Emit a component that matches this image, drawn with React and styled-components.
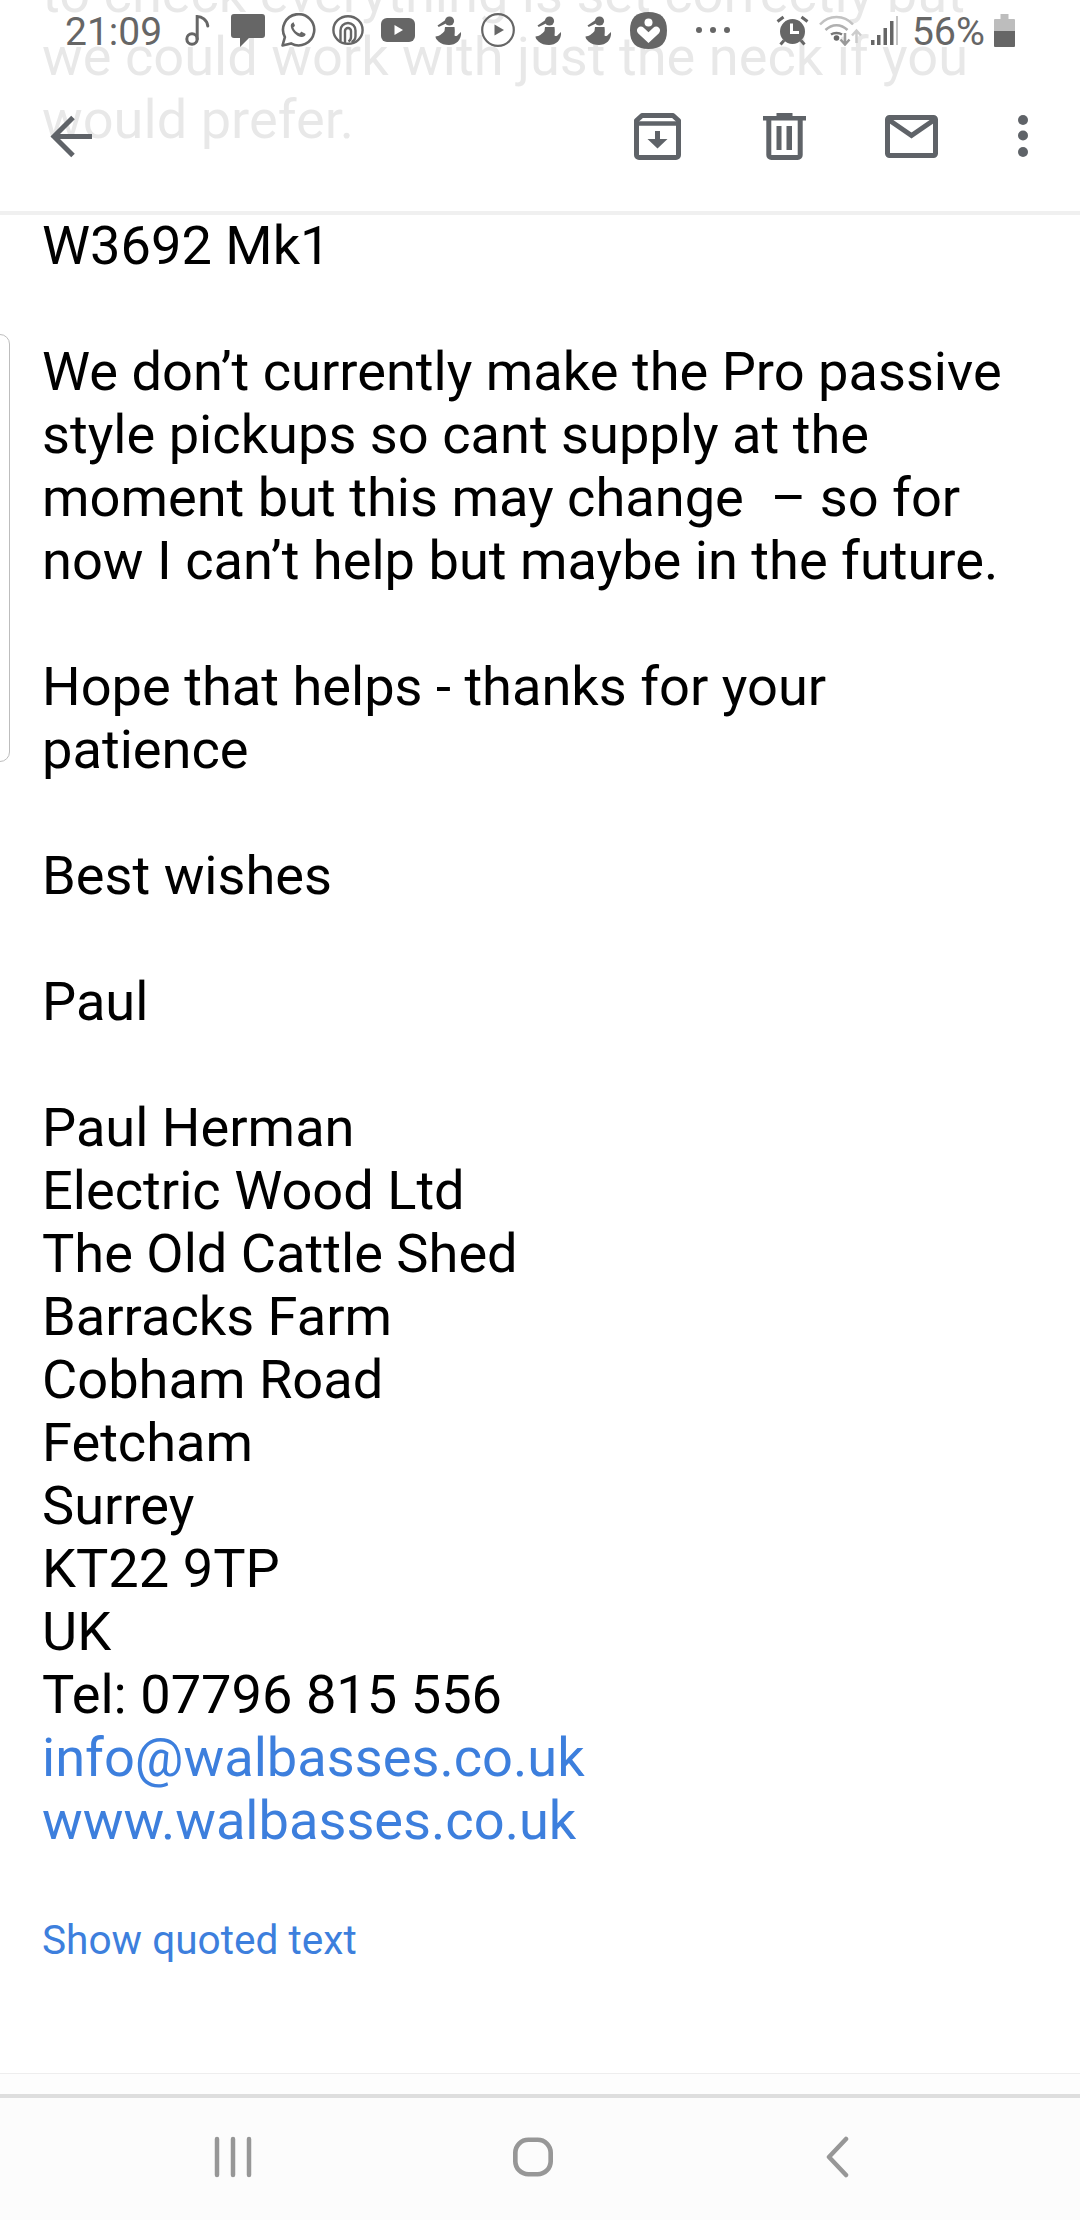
import React from "react";
import styled, { createGlobalStyle } from "styled-components";

const GlobalStyle = createGlobalStyle`
  html, body {
    margin: 0;
    padding: 0;
    background: #fff;
  }
`;

const Page = styled.div`
  position: relative;
  width: 1080px;
  height: 2220px;
  display: flex;
  flex-direction: column;
  overflow: hidden;
  background: #fff;
  font-family: Roboto, "Liberation Sans", sans-serif;
`;

const Header = styled.header`
  position: absolute;
  top: 0;
  left: 0;
  right: 0;
  height: 211px;
  background: rgba(255, 255, 255, 0.91);
  border-bottom: 4px solid #f0f0f0;
`;

const StatusBar = styled.div`
  display: flex;
  align-items: center;
  height: 60px;
  padding-left: 65px;
  color: #666666;
`;

const Time = styled.span`
  font-size: 39px;
  line-height: 60px;
  width: 108px;
  flex: none;
  position: relative;
  top: 2px;
`;

const Slot = styled.div`
  width: 50px;
  height: 60px;
  flex: none;
  display: flex;
  align-items: center;
  justify-content: center;
`;

const Overflow = styled.div`
  display: flex;
  gap: 8px;
  margin-left: 23px;
  span {
    width: 6px;
    height: 6px;
    border-radius: 50%;
    background: #666666;
  }
`;

const RightGroup = styled.div`
  display: flex;
  align-items: center;
  margin-left: auto;
  padding-right: 65px;
`;

const Tray = styled.div`
  display: flex;
  align-items: center;
  margin-left: ${(p) => p.$gap || 0}px;
`;

const Percent = styled.span`
  font-size: 39.5px;
  line-height: 60px;
  margin-left: 14px;
  position: relative;
  top: 2px;
`;

const Battery = styled.div`
  width: 21px;
  height: 33px;
  margin-left: 9px;
`;

const ActionBar = styled.div`
  display: flex;
  align-items: center;
  height: 60px;
  margin-top: 46px;
  padding-left: 50px;
`;

const ActionGroup = styled.div`
  display: flex;
  align-items: center;
  margin-left: auto;
  padding-right: 52px;
`;

const ActionButton = styled.div`
  display: flex;
  align-items: center;
  justify-content: center;
  margin-left: ${(p) => p.$gap || 0}px;
`;

const ScrollHandle = styled.div`
  position: absolute;
  left: -10px;
  top: 334px;
  width: 18px;
  height: 426px;
  border: 1.5px solid #bdbdbd;
  border-radius: 10px;
`;

const Message = styled.main`
  flex: 1;
  margin-top: -38px;
  padding-left: 42px;
  color: #000;
  font-size: 54.2px;
  line-height: 63px;
`;

const Paragraph = styled.p`
  margin: 0 0 63px;
`;

const Line = styled.span`
  display: block;
  white-space: pre;
`;

const Link = styled.span`
  display: block;
  white-space: pre;
  color: #3d7fdd;
`;

const QuotedLink = styled.div`
  margin-top: 60px;
  color: #3d7fdd;
  font-size: 40.6px;
  line-height: 56px;
`;

const Footer = styled.div`
  height: 20px;
  flex: none;
  background: #fdfdfd;
  border-top: 1px solid #eeeeee;
`;

const NavBar = styled.nav`
  height: 122px;
  flex: none;
  display: flex;
  align-items: flex-start;
  background: #fcfcfc;
  border-top: 4px solid #dedede;
`;

const NavItem = styled.div`
  display: flex;
  width: 40px;
  height: 42px;
  flex: none;
  margin-top: 38px;
  margin-left: ${(p) => p.$left}px;
`;

const MusicIcon = () => (
  <svg width="26" height="32" viewBox="0 0 26 32" fill="none" stroke="#666" strokeWidth="3">
    <circle cx="7" cy="25" r="5.2" />
    <path d="M12.2 25V2.5c4.5 0 9.8 3 10.6 9.5" strokeLinecap="round" />
  </svg>
);

const BubbleIcon = () => (
  <svg width="34" height="33" viewBox="0 0 34 33">
    <path d="M3 0h28a3 3 0 0 1 3 3v18a3 3 0 0 1-3 3H18l-9 9v-9H3a3 3 0 0 1-3-3V3a3 3 0 0 1 3-3z" fill="#666" />
  </svg>
);

const WhatsappIcon = () => (
  <svg width="35" height="34" viewBox="0 0 35 34" fill="none">
    <path d="M1.5 32.5l2.4-8.3A15.6 15.6 0 1 1 10 30.4z" stroke="#666" strokeWidth="2.6" strokeLinejoin="round" />
    <path d="M12 9.5c-1.5.6-2.6 2.2-2.1 4.4 1 4.4 5.2 9 10.2 10 2.2.4 3.8-.7 4.4-2.2.2-.6 0-1-.5-1.3l-3-1.5c-.5-.2-.9-.1-1.2.3l-1.2 1.4c-3-1-5.3-3.3-6.3-6l1.3-1.3c.3-.4.4-.8.2-1.2l-1.3-2.6c-.2-.5-.4-.6-.5-.4z" fill="#666" />
  </svg>
);

const SpiralIcon = () => (
  <svg width="32" height="30" viewBox="0 0 32 30" fill="none" stroke="#666" strokeWidth="2.4">
    <ellipse cx="16" cy="15" rx="14.6" ry="13.8" />
    <path d="M8.5 26V15.5a7.5 7.5 0 0 1 15 0V21c0 3-1.5 5-4 6" />
    <path d="M13 28V16a3 3 0 0 1 6 0v6c0 2-1 3.5-2.5 4.5" />
  </svg>
);

const YoutubeIcon = () => (
  <svg width="34" height="24" viewBox="0 0 34 24">
    <rect width="34" height="24" rx="6" fill="#666" />
    <path d="M13.5 7l8.5 5-8.5 5z" fill="#fff" />
  </svg>
);

const FigureIcon = () => (
  <svg width="28" height="29" viewBox="0 0 28 29" fill="#666">
    <circle cx="15.5" cy="5" r="4.6" />
    <path d="M11.5 4L3.5 9.5l1.2 1.5 7.3-3.500z" />
    <path d="M11 11h9.500c.4 3 .4 5.500 0 8.500 1.500 1 2.800.5 3.800-1l2.700-2.500c.5 4-1 7-3 9.500-2.500 2.500-6 3.500-9 3.500-4 0-8-1-10.500-3.500C3 24 1.500 22.500 1.500 20.500c3.500 0 7-3 9-5.500z" />
  </svg>
);

const PlayCircleIcon = () => (
  <svg width="34" height="34" viewBox="0 0 34 34" fill="none">
    <circle cx="17" cy="17" r="15.8" stroke="#666" strokeWidth="2.2" />
    <path d="M13.5 11.5L23 17l-9.5 5.5z" fill="#666" />
  </svg>
);

const HealthIcon = () => (
  <svg width="37" height="37" viewBox="0 0 37 37">
    <path d="M18.5 0C31 0 37 6 37 18.5S31 37 18.5 37 0 31 0 18.5 6 0 18.5 0z" fill="#666" />
    <circle cx="18.5" cy="10.5" r="4" fill="#fff" />
    <path d="M18.5 31L8.3 21.5c-1.8-1.8-1.8-4.3-.2-5.800 1.700-1.500 4-1.400 5.600.1l4.800 4.500 4.800-4.500c1.600-1.500 3.900-1.600 5.600-.1 1.600 1.500 1.600 4-.2 5.800z" fill="#fff" />
  </svg>
);

const AlarmIcon = () => (
  <svg width="33" height="32" viewBox="0 0 33 32" fill="none">
    <circle cx="16.5" cy="17.5" r="12.5" fill="#666" />
    <path d="M15.5 9.5v9h7.5" stroke="#fff" strokeWidth="3" />
    <path d="M1.5 7.5L7.5 3M31.5 7.5l-6-4.500M8 26.500l-3.500 4M25 26.500l3.500 4" stroke="#666" strokeWidth="3" />
  </svg>
);

const WifiIcon = () => (
  <svg width="43" height="32" viewBox="0 0 43 32" fill="none">
    <path d="M1 10.5C10 .5 25 .5 34 10.5" stroke="#c2c2c2" strokeWidth="2.5" />
    <path d="M6.5 16C13 9.5 22 9.5 28.5 16" stroke="#b0b0b0" strokeWidth="2.5" />
    <path d="M12 20.5c3-2 8-2 11 0" stroke="#777" strokeWidth="2.5" />
    <circle cx="17.5" cy="24" r="2.8" fill="#666" />
    <path d="M26 19v11M21.5 25.5l4.5 5 4.5-5" stroke="#999" strokeWidth="2.5" />
    <path d="M37.5 29V17M33 21.5l4.5-5 4.5 5" stroke="#ccc" strokeWidth="2.5" />
  </svg>
);

const SignalIcon = () => (
  <svg width="27" height="29" viewBox="0 0 27 29" fill="#666">
    <rect x="0" y="24" width="3.5" height="5" />
    <rect x="6" y="19" width="3.5" height="10" />
    <rect x="12.5" y="12" width="3.5" height="17" />
    <rect x="19" y="5" width="3.5" height="24" />
    <rect x="25" y="0" width="2" height="29" fill="#c4c4c4" />
  </svg>
);

const BatteryIcon = () => (
  <svg width="21" height="33" viewBox="0 0 21 33">
    <path d="M6.5 0h8v5h5.500a1 1 0 0 1 1 1v11H0V6a1 1 0 0 1 1-1h5.500z" fill="#bdbdbd" />
    <path d="M0 17h21v15a1 1 0 0 1-1 1H1a1 1 0 0 1-1-1z" fill="#666" />
  </svg>
);

const BackIcon = () => (
  <svg width="43" height="43" viewBox="0 0 43 43" fill="none" stroke="#5f6368" strokeWidth="5">
    <path d="M42 21.5H4M23 2.5L4 21.5l19 19" />
  </svg>
);

const ArchiveIcon = () => (
  <svg width="47" height="47" viewBox="0 0 47 47" fill="none">
    <path d="M8 2.5h31l5.500 5v34.500a2.500 2.500 0 0 1-2.500 2.500H5A2.500 2.500 0 0 1 2.500 42V7.500z" stroke="#5f6368" strokeWidth="5" strokeLinejoin="round" />
    <path d="M3 10.5h41" stroke="#5f6368" strokeWidth="4.5" />
    <path d="M21 18h5v8h7.5l-10 9.5-10-9.500H21z" fill="#5f6368" />
  </svg>
);

const TrashIcon = () => (
  <svg width="43" height="47" viewBox="0 0 43 47">
    <path d="M13.5 0h16v3H43v4.500H0V3h13.500z" fill="#5f6368" />
    <path d="M5.8 7v35a2.500 2.500 0 0 0 2.500 2.500h26.400a2.500 2.500 0 0 0 2.500-2.500V7" fill="none" stroke="#5f6368" strokeWidth="5" />
    <rect x="13.5" y="13" width="5" height="24" fill="#5f6368" />
    <rect x="23.5" y="13" width="5.5" height="24" fill="#5f6368" />
  </svg>
);

const MailIcon = () => (
  <svg width="53" height="43" viewBox="0 0 53 43" fill="none" stroke="#5f6368" strokeWidth="5">
    <rect x="2.5" y="2.5" width="48" height="38" rx="2" strokeLinejoin="round" />
    <path d="M4 5l22.5 15.500L49 5" />
  </svg>
);

const MoreIcon = () => (
  <svg width="10" height="42" viewBox="0 0 10 42" fill="#5f6368">
    <circle cx="5" cy="5" r="5" />
    <circle cx="5" cy="20.5" r="5" />
    <circle cx="5" cy="37" r="5" />
  </svg>
);

const RecentsIcon = () => (
  <svg width="40" height="42" viewBox="0 0 40 42" fill="none" stroke="#979797" strokeWidth="4.5" strokeLinecap="round">
    <path d="M4 3v36M20 3v36M36 3v36" />
  </svg>
);

const HomeIcon = () => (
  <svg width="43" height="42" viewBox="0 0 43 42" fill="none">
    <rect x="2.5" y="2.5" width="38" height="37" rx="14" stroke="#979797" strokeWidth="5" />
  </svg>
);

const ChevronIcon = () => (
  <svg width="24" height="42" viewBox="0 0 24 42" fill="none" stroke="#979797" strokeWidth="4.5" strokeLinecap="round" strokeLinejoin="round">
    <path d="M21 3L4 21l17 18" />
  </svg>
);

const notifications = [
  MusicIcon,
  BubbleIcon,
  WhatsappIcon,
  SpiralIcon,
  YoutubeIcon,
  FigureIcon,
  PlayCircleIcon,
  FigureIcon,
  FigureIcon,
  HealthIcon,
];

const paragraphs = [
  [
    "to check everything is set correctly but",
    "we could work with just the neck if you",
    "would prefer.",
  ],
  ["W3692 Mk1"],
  [
    "We don’t currently make the Pro passive",
    "style pickups so cant supply at the",
    "moment but this may change  – so for",
    "now I can’t help but maybe in the future.",
  ],
  ["Hope that helps - thanks for your", "patience"],
  ["Best wishes"],
  ["Paul"],
];

const address = [
  "Paul Herman",
  "Electric Wood Ltd",
  "The Old Cattle Shed",
  "Barracks Farm",
  "Cobham Road",
  "Fetcham",
  "Surrey",
  "KT22 9TP",
  "UK",
  "Tel: 07796 815 556",
];

export default function App() {
  return (
    <Page>
      <GlobalStyle />
      <Message>
        {paragraphs.map((lines) => (
          <Paragraph key={lines[0]}>
            {lines.map((line) => (
              <Line key={line}>{line}</Line>
            ))}
          </Paragraph>
        ))}
        <div>
          {address.map((line) => (
            <Line key={line}>{line}</Line>
          ))}
          <Link>info@walbasses.co.uk</Link>
          <Link>www.walbasses.co.uk</Link>
        </div>
        <QuotedLink>Show quoted text</QuotedLink>
      </Message>
      <ScrollHandle />
      <Header>
        <StatusBar>
          <Time>21:09</Time>
          {notifications.map((Icon, i) => (
            <Slot key={i}>
              <Icon />
            </Slot>
          ))}
          <Overflow>
            <span />
            <span />
            <span />
          </Overflow>
          <RightGroup>
            <AlarmIcon />
            <Tray $gap={10}>
              <WifiIcon />
            </Tray>
            <Tray $gap={9}>
              <SignalIcon />
            </Tray>
            <Percent>56%</Percent>
            <Battery>
              <BatteryIcon />
            </Battery>
          </RightGroup>
        </StatusBar>
        <ActionBar>
          <BackIcon />
          <ActionGroup>
            <ActionButton>
              <ArchiveIcon />
            </ActionButton>
            <ActionButton $gap={82}>
              <TrashIcon />
            </ActionButton>
            <ActionButton $gap={79}>
              <MailIcon />
            </ActionButton>
            <ActionButton $gap={80}>
              <MoreIcon />
            </ActionButton>
          </ActionGroup>
        </ActionBar>
      </Header>
      <Footer />
      <NavBar>
        <NavItem $left={213}>
          <RecentsIcon />
        </NavItem>
        <NavItem $left={260}>
          <HomeIcon />
        </NavItem>
        <NavItem $left={272}>
          <ChevronIcon />
        </NavItem>
      </NavBar>
    </Page>
  );
}
